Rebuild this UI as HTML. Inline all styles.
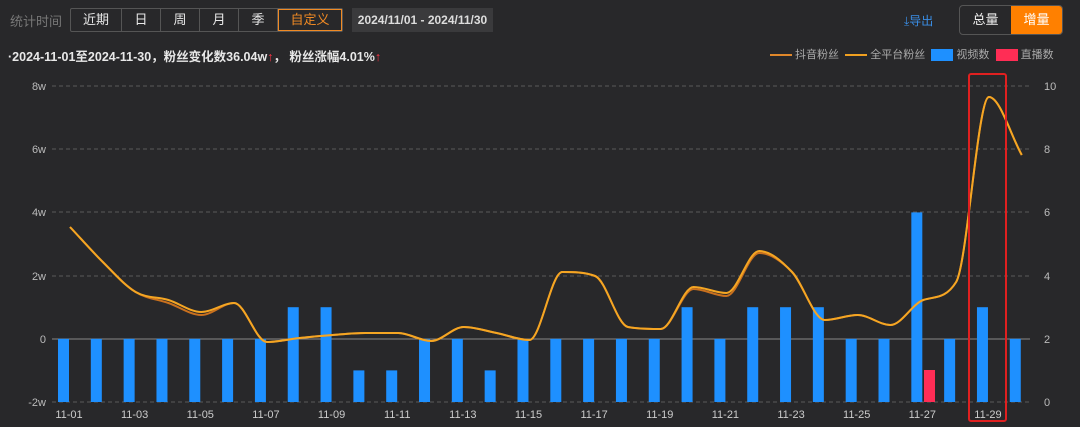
<!DOCTYPE html>
<html><head><meta charset="utf-8">
<style>
body{margin:0;width:1080px;height:427px;background:#28282a;font-family:"Liberation Sans","Noto Sans CJK SC",sans-serif;overflow:hidden;position:relative;color:#ddd}
.a{position:absolute;white-space:nowrap}
.seg{position:absolute;top:8px;left:70px;height:22px;display:flex;border:1px solid #555;border-radius:2px}
.seg div{height:22px;line-height:22px;font-size:13px;color:#e8e8e8;text-align:center;border-right:1px solid #555}
.seg div:last-child{border-right:none}
</style></head><body>
<div class="a" style="left:10px;top:11px;font-size:13px;color:#777">统计时间</div>
<div class="seg">
<div style="width:50px">近期</div><div style="width:38px">日</div><div style="width:38px">周</div><div style="width:38px">月</div><div style="width:38px">季</div><div style="width:62px;color:#f08a24;border:1px solid #f08a24;height:20px;line-height:20px">自定义</div>
</div>
<div class="a" style="left:352px;top:8px;width:141px;height:24px;background:#3a3a3c;font-size:12px;line-height:24px;text-align:center;color:#ddd;font-weight:bold">2024/11/01 - 2024/11/30</div>
<div class="a" style="left:8px;top:46px;font-size:12.5px;color:#e8e8e8;font-weight:bold">·2024-11-01至2024-11-30，粉丝变化数36.04w<span style="color:#ff3344">↑</span>， 粉丝涨幅4.01%<span style="color:#ff3344">↑</span></div>
<div class="a" style="left:904px;top:12px;font-size:12px;color:#3a8ee6">⤓导出</div>
<div class="a" style="left:959px;top:5px;width:102px;height:28px;border:1px solid #555;border-radius:4px;overflow:hidden">
<div class="a" style="left:0;top:0;width:51px;height:28px;line-height:28px;text-align:center;font-size:13px;color:#eee">总量</div>
<div class="a" style="left:51px;top:0;width:51px;height:28px;line-height:28px;text-align:center;font-size:13px;color:#fff;background:#ff8000">增量</div>
</div>
<div class="a" style="left:770px;top:48px;font-size:11px;color:#aaa;line-height:14px">
<span style="display:inline-block;width:22px;height:2px;background:#e0872a;vertical-align:middle"></span> 抖音粉丝 &nbsp;<span style="display:inline-block;width:22px;height:2px;background:#f0a020;vertical-align:middle"></span> 全平台粉丝 &nbsp;<span style="display:inline-block;width:22px;height:12px;background:#1e90ff;vertical-align:middle"></span> 视频数 &nbsp;<span style="display:inline-block;width:22px;height:12px;background:#ff2d55;vertical-align:middle"></span> 直播数</div>
<svg id="c" class="a" style="left:0;top:0" width="1080" height="427"></svg>
<script>
var s='';
var ys=[86,149,212,276,339,402],ll=['8w','6w','4w','2w','0','-2w'],rl=['10','8','6','4','2','0'];
ys.forEach(function(y,i){s+='<line x1="52" x2="1030" y1="'+y+'" y2="'+y+'" stroke="'+(i==4?'#888':'#5a5a5a')+'" stroke-dasharray="'+(i==4?'0':'4 3')+'"/>';
s+='<text x="46" y="'+(y+4)+'" fill="#bbb" font-size="11" text-anchor="end" font-family="Liberation Sans">'+ll[i]+'</text>';
s+='<text x="1044" y="'+(y+4)+'" fill="#bbb" font-size="11" font-family="Liberation Sans">'+rl[i]+'</text>';});
var v=[2,2,2,2,2,2,2,3,3,1,1,2,2,1,2,2,2,2,2,3,2,3,3,3,2,2,6,2,3,2];
for(var i=0;i<30;i++){var x=58+32.82*i,h=v[i]*31.6;s+='<rect x="'+x+'" y="'+(402-h)+'" width="11" height="'+h+'" fill="#1e90ff"/>';
if(i%2==0)s+='<text x="'+(x+11)+'" y="418" fill="#ccc" font-size="11" text-anchor="middle" font-family="Liberation Sans">11-'+(i+1<10?'0':'')+(i+1)+'</text>';}
s+='<rect x="924" y="370" width="11" height="32" fill="#ff2d55"/>';
var ly=[227,262,292,300,312,303,342,338,335,333,333,341,327,333,340,272,276,327,329,287,293,251,272,320,315,325,300,282,97,155];
function path(off){var n=30,x=[],y=[];for(var i=0;i<n;i++){x.push(70+32.82*i);y.push(ly[i]+off[i]);}
var d=[],m=[];for(var i=0;i<n-1;i++)d.push((y[i+1]-y[i])/(x[i+1]-x[i]));
m[0]=d[0];m[n-1]=d[n-2];for(var i=1;i<n-1;i++){m[i]=(d[i-1]*d[i]<=0)?0:(d[i-1]+d[i])/2;}
for(var i=0;i<n-1;i++){if(d[i]==0){m[i]=m[i+1]=0;continue;}var a=m[i]/d[i],b=m[i+1]/d[i],t=a*a+b*b;if(t>9){t=3/Math.sqrt(t);m[i]=t*a*d[i];m[i+1]=t*b*d[i];}}
var p='M'+x[0]+','+y[0];for(var i=0;i<n-1;i++){var h=(x[i+1]-x[i])/3;p+=' C'+(x[i]+h)+','+(y[i]+m[i]*h)+' '+(x[i+1]-h)+','+(y[i+1]-m[i+1]*h)+' '+x[i+1]+','+y[i+1];}return p;}
var o1=[],o2=[];for(var i=0;i<30;i++){o1.push(0);o2.push(0);}o1[3]=3;o1[4]=3;o1[19]=2;o1[20]=3;o1[21]=2;
s+='<path d="'+path(o1)+'" fill="none" stroke="#c9701e" stroke-width="2"/>';
s+='<path d="'+path(o2)+'" fill="none" stroke="#f5a623" stroke-width="2"/>';
s+='<rect x="969" y="74" width="37" height="347" fill="none" stroke="#e02020" stroke-width="2" rx="2"/>';
document.getElementById('c').innerHTML=s;
</script>
</body></html>
